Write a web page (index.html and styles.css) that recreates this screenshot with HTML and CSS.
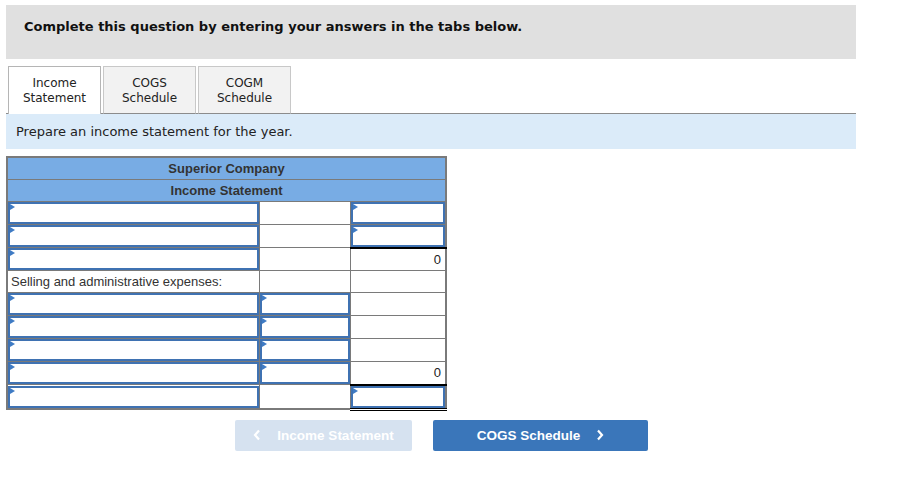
FILE: index.html
```html
<!DOCTYPE html>
<html>
<head>
<meta charset="utf-8">
<link rel="stylesheet" href="styles.css">
</head>
<body>
<div class="page">
  <div class="banner">Complete this question by entering your answers in the tabs below.</div>
  <div class="tabs">
    <div class="tab active">Income<br>Statement</div>
    <div class="tab">COGS<br>Schedule</div>
    <div class="tab">COGM<br>Schedule</div>
  </div>
  <div class="instr">Prepare an income statement for the year.</div>
  <table class="stmt">
    <colgroup><col class="c1"><col class="c2"><col class="c3"></colgroup>
    <tr class="hd"><td colspan="3">Superior Company</td></tr>
    <tr class="hd"><td colspan="3">Income Statement</td></tr>
    <tr><td><div class="inp"></div></td><td></td><td><div class="inp"></div></td></tr>
    <tr><td><div class="inp"></div></td><td></td><td><div class="inp"></div></td></tr>
    <tr><td><div class="inp"></div></td><td></td><td class="total"><span class="num">0</span></td></tr>
    <tr><td class="label">Selling and administrative expenses:</td><td></td><td></td></tr>
    <tr><td><div class="inp"></div></td><td><div class="inp"></div></td><td></td></tr>
    <tr><td><div class="inp"></div></td><td><div class="inp"></div></td><td></td></tr>
    <tr><td><div class="inp"></div></td><td><div class="inp"></div></td><td></td></tr>
    <tr><td><div class="inp"></div></td><td><div class="inp"></div></td><td><span class="num">0</span></td></tr>
    <tr><td><div class="inp"></div></td><td></td><td class="final"><div class="inp"></div></td></tr>
  </table>
  <div class="nav">
    <div class="btn prev"><svg width="8" height="12" viewBox="0 0 8 12"><polyline points="6,1.5 2,6 6,10.5" fill="none" stroke="#fff" stroke-width="2.2"/></svg><span>Income Statement</span></div>
    <div class="btn next"><span>COGS Schedule</span><svg width="8" height="12" viewBox="0 0 8 12"><polyline points="2,1.5 6,6 2,10.5" fill="none" stroke="#fff" stroke-width="2.2"/></svg></div>
  </div>
</div>
</body>
</html>
```
FILE: styles.css
```css
html, body { margin: 0; padding: 0; background: #fff; }
body { font-family: "DejaVu Sans", Verdana, sans-serif; color: #000; }
.page { padding: 5px 0 0 6px; width: 850px; }
.banner {
  background: #e0e0e0;
  height: 54px;
  box-sizing: border-box;
  padding: 14px 18px 0 18px;
  font-size: 13px;
  line-height: 16px;
  font-weight: bold;
  color: #111;
}
.tabs {
  display: flex;
  gap: 2px;
  margin-top: 7px;
  padding-left: 2px;
  position: relative;
  z-index: 1;
}
.tab {
  width: 93px;
  height: 48px;
  margin-bottom: -1px;
  box-sizing: border-box;
  border: 1px solid #c8c8c8;
  border-bottom: 1px solid #8c8c8c;
  padding-top: 2px;
  background: #f2f2f2;
  font-size: 12px;
  line-height: 15px;
  color: #222;
  text-align: center;
  display: flex;
  align-items: center;
  justify-content: center;
}
.tab.active { background: #fff; border-color: #b5b5b5; border-bottom: none; padding-top: 0; }
.instr {
  border-top: 1px solid #8c8c8c;
  background: #dbebf9;
  height: 36px;
  box-sizing: border-box;
  padding: 10px 0 0 10px;
  font-size: 13px;
  line-height: 16px;
  color: #222;
}
.stmt {
  margin-top: 7px;
  border-collapse: collapse;
  border: 2px solid #7a7a7a;
  width: 441px;
  table-layout: fixed;
  font-family: "Liberation Sans", Arial, sans-serif;
}
.c1 { width: 252px; }
.c2 { width: 91px; }
.c3 { width: 96px; }
.stmt td {
  border: 1px solid #7a7a7a;
  height: 22px;
  padding: 0;
  box-sizing: border-box;
  position: relative;
}
.stmt tr.hd td {
  background: #78ace4;
  text-align: center;
  font-weight: bold;
  font-size: 13px;
  color: #333;
  height: 22px;
}
.inp {
  box-sizing: border-box;
  height: 22px;
  border: 2px solid #3f72b2;
  position: relative;
}
.inp::before {
  content: "";
  position: absolute;
  left: 0;
  top: 0;
  border-top: 3px solid transparent;
  border-bottom: 3px solid transparent;
  border-left: 5px solid #3f7bc4;
}
.label { font-size: 13px; color: #333; padding-left: 3px !important; }
.num { display: block; text-align: right; padding-right: 4px; font-size: 13px; color: #222; }
.stmt td.total { border-top: 2px solid #000; }
.stmt td.final { border-top: 2px solid #000; border-bottom: 3px double #000; }
.nav {
  display: flex;
  gap: 21px;
  margin: 9px 0 0 229px;
  font-family: "Liberation Sans", Arial, sans-serif;
}
.btn {
  height: 31px;
  border-radius: 2px;
  display: flex;
  align-items: center;
  justify-content: center;
  gap: 16px;
  color: #fff;
  font-weight: bold;
  font-size: 13.5px;
}
.btn.prev { width: 177px; background: #d6e2f0; }
.btn.next { width: 215px; background: #3a76ba; }
```
